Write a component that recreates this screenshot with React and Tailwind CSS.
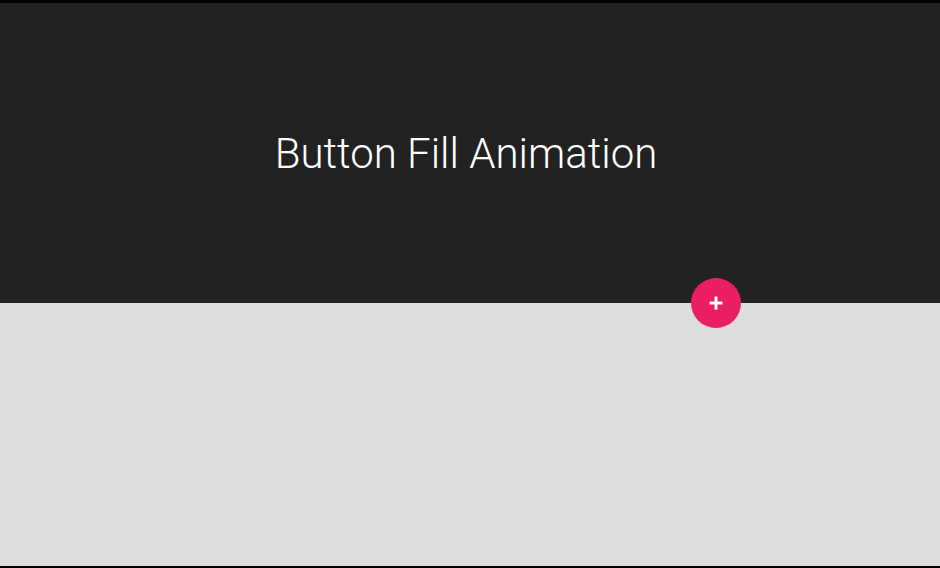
import React from 'react';

export default function App() {
  return (
    <div className="flex h-screen flex-col border-t-[3px] border-b-2 border-black bg-[#dddddd] font-['Roboto',sans-serif]">
      <header className="relative flex h-[300px] shrink-0 items-center justify-center bg-[#222222]">
        <h1 className="mt-[1px] mr-[8px] text-[42px] font-light text-white">Button Fill Animation</h1>
        <button className="absolute right-[199px] -bottom-[25px] flex h-[50px] w-[50px] items-center justify-center rounded-full bg-[#e91e63] text-white">
          <svg width="16" height="16" viewBox="0 0 16 16">
            <path d="M8 1.5v13M1.5 8h13" stroke="white" strokeWidth="3" />
          </svg>
        </button>
      </header>
      <main className="flex-1" />
    </div>
  );
}
